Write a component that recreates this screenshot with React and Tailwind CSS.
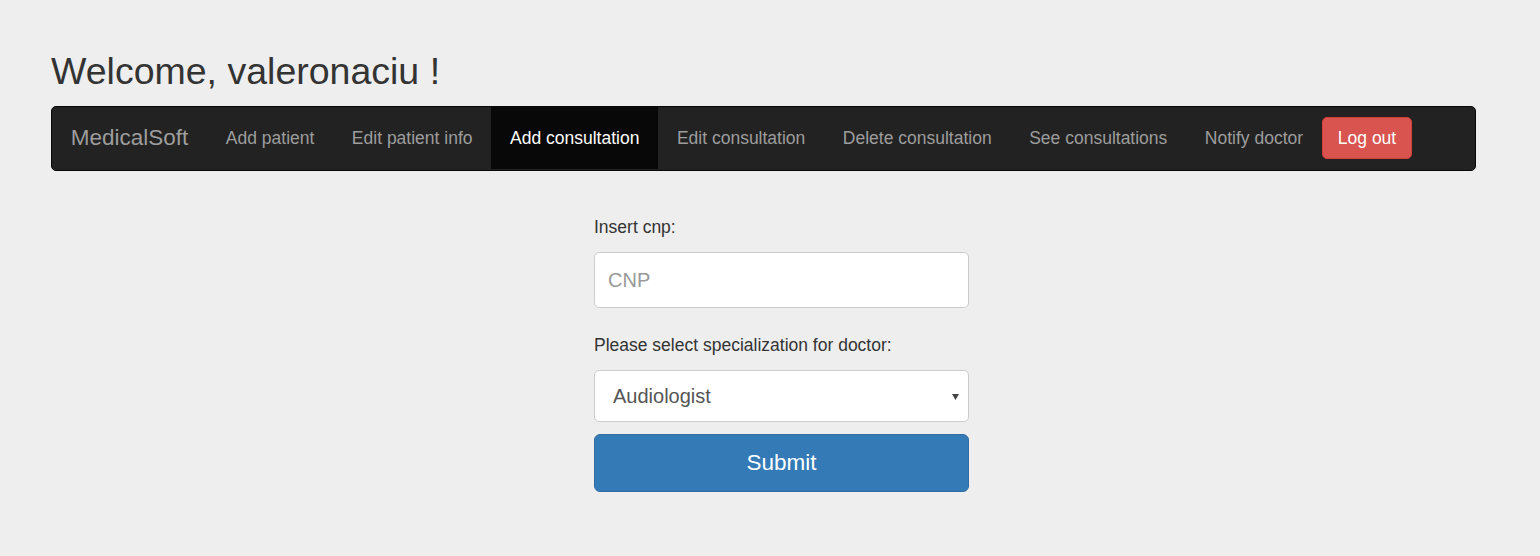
export default function App() {
  const font = { fontFamily: '"Liberation Sans", Arial, Helvetica, sans-serif' };
  const links = [
    { label: "Add patient" },
    { label: "Edit patient info" },
    { label: "Add consultation", active: true },
    { label: "Edit consultation" },
    { label: "Delete consultation" },
    { label: "See consultations" },
    { label: "Notify doctor" },
  ];
  return (
    <div className="min-h-[556px] w-full bg-[#eeeeee] text-[#333333]" style={font}>
      <div className="w-[1425px] ml-[51px] pt-[51px]">
        <h1 className="text-[37.5px] leading-[1.1] font-normal text-[#333333]">Welcome, valeronaciu !</h1>
        <nav className="mt-[14px] h-[65px] pb-[1px] bg-[#222222] border border-[#080808] rounded-[5px] flex items-stretch">
          <div className="px-[18.75px] flex items-center text-[22.5px] text-[#9d9d9d]">MedicalSoft</div>
          {links.map((l) =>
            l.active ? (
              <div key={l.label} className="px-[18.75px] flex items-center text-[17.5px] bg-[#080808] text-white">
                {l.label}
              </div>
            ) : (
              <div key={l.label} className="px-[18.75px] flex items-center text-[17.5px] text-[#9d9d9d]">
                {l.label}
              </div>
            )
          )}
          <div className="self-center h-[42px] px-[15px] flex items-center bg-[#d9534f] border border-[#d43f3a] rounded-[5px] text-white text-[17.5px]">
            Log out
          </div>
        </nav>
        <div className="ml-[543px] w-[375px] pt-[44px]">
          <div className="text-[17.5px] leading-[25px] text-[#333333]">Insert cnp:</div>
          <input
            placeholder="CNP"
            className="mt-[12px] block w-full h-[56px] px-[13px] bg-white border border-[#cccccc] rounded-[5px] text-[20px] text-[#555555] placeholder:text-[#999999] outline-none"
            style={font}
          />
          <div className="mt-[25px] text-[17.5px] leading-[25px] text-[#333333]">Please select specialization for doctor:</div>
          <div className="mt-[12px] h-[52px] pl-[18px] pr-[9px] bg-white border border-[#cccccc] rounded-[5px] flex items-center justify-between">
            <span className="text-[20px] text-[#555555]">Audiologist</span>
            <svg width="7" height="6" viewBox="0 0 7 6" className="mt-[1px]">
              <path d="M0 0 H7 L3.5 6 Z" fill="#444444" />
            </svg>
          </div>
          <div className="mt-[12px] h-[58px] bg-[#337ab7] border border-[#2e6da4] rounded-[6px] flex items-center justify-center text-white text-[22.5px]">
            Submit
          </div>
        </div>
      </div>
    </div>
  );
}
